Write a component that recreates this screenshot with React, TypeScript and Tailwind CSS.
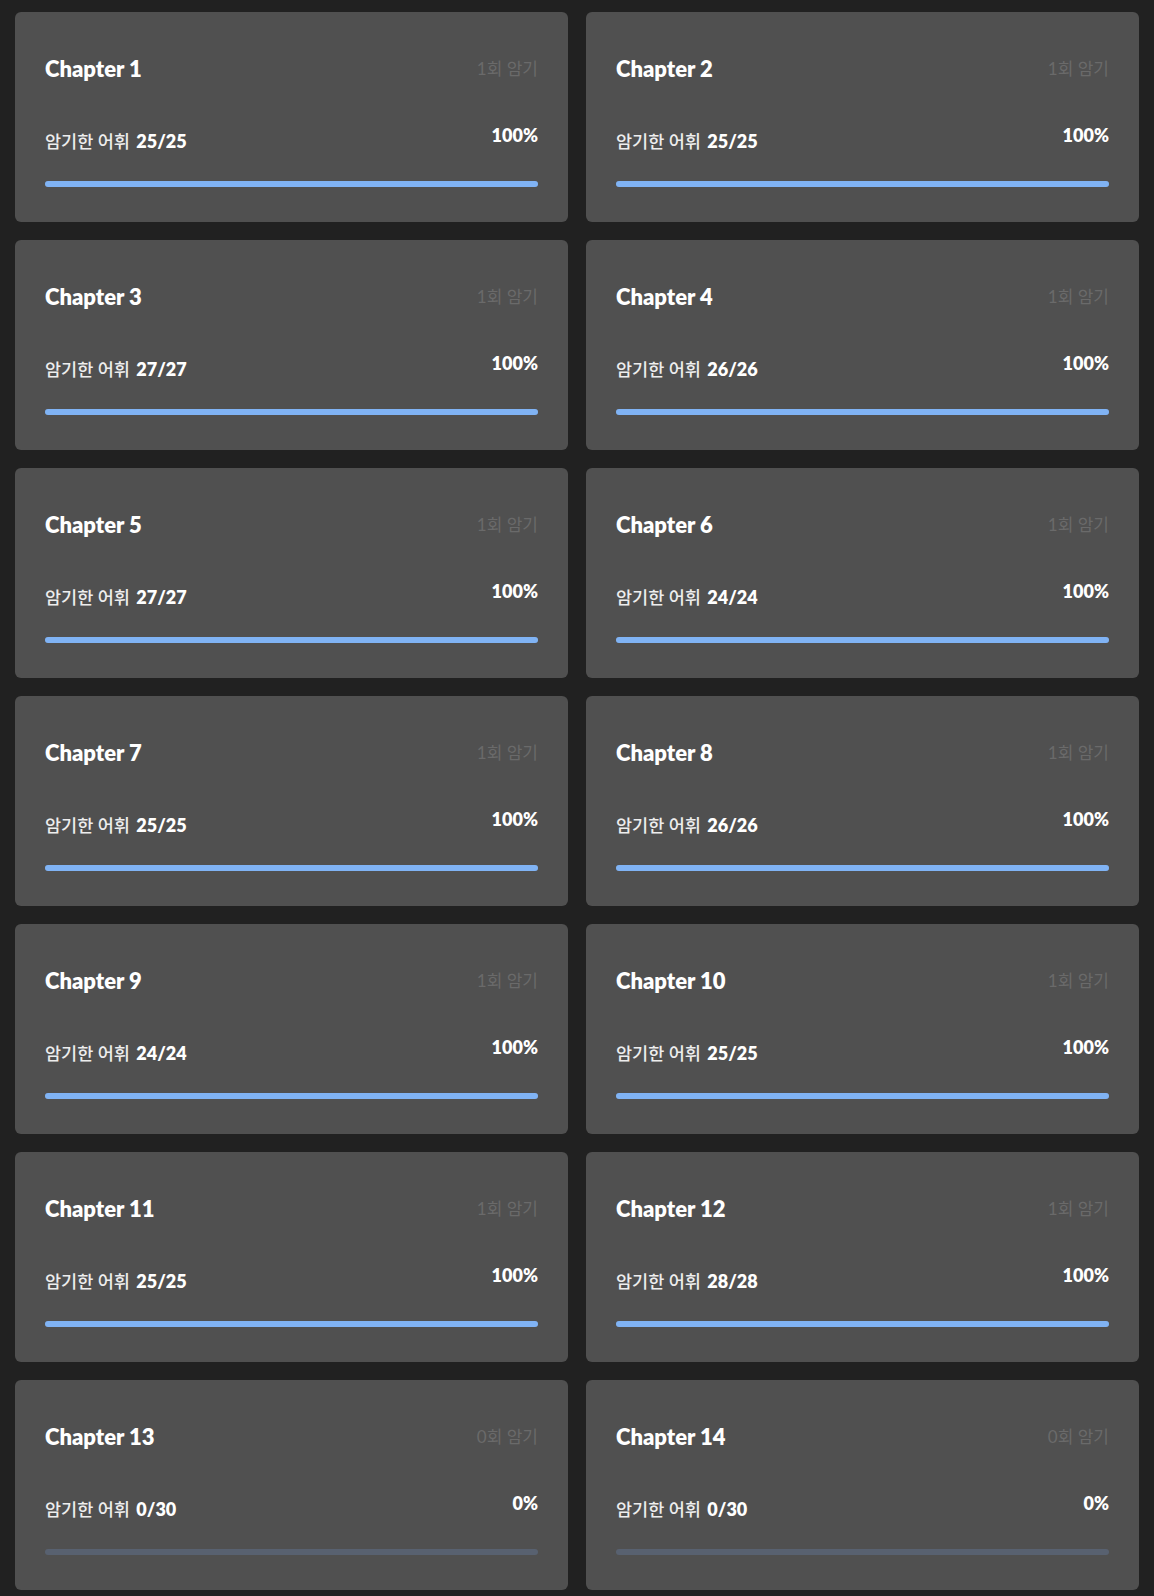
type Chapter = {
  no: number;
  done: number;
  total: number;
  rounds: number;
};

const chapters: Chapter[] = [
  { no: 1, done: 25, total: 25, rounds: 1 },
  { no: 2, done: 25, total: 25, rounds: 1 },
  { no: 3, done: 27, total: 27, rounds: 1 },
  { no: 4, done: 26, total: 26, rounds: 1 },
  { no: 5, done: 27, total: 27, rounds: 1 },
  { no: 6, done: 24, total: 24, rounds: 1 },
  { no: 7, done: 25, total: 25, rounds: 1 },
  { no: 8, done: 26, total: 26, rounds: 1 },
  { no: 9, done: 24, total: 24, rounds: 1 },
  { no: 10, done: 25, total: 25, rounds: 1 },
  { no: 11, done: 25, total: 25, rounds: 1 },
  { no: 12, done: 28, total: 28, rounds: 1 },
  { no: 13, done: 0, total: 30, rounds: 0 },
  { no: 14, done: 0, total: 30, rounds: 0 },
];

function ChapterCard({ c }: { c: Chapter }) {
  const pct = Math.round((c.done / c.total) * 100);

  return (
    <div className="h-[210px] rounded-md bg-[#505050] px-[30px] pt-[43px]">
      <div className="flex items-start justify-between">
        <h2 className="text-[22px] font-extrabold leading-[28px] text-white">
          Chapter {c.no}
        </h2>
        <span className="mt-[2px] text-[17px] leading-[24px] text-[#6a6a6a]">
          {c.rounds}회 암기
        </span>
      </div>
      <div className="mt-[40px] flex items-start justify-between">
        <span className="mt-[6px] text-[17.5px] font-medium leading-[24px] text-[#ededed]">
          암기한 어휘{" "}
          <strong className="ml-[2px] text-[18px] font-extrabold text-white">
            {c.done}/{c.total}
          </strong>
        </span>
        <span className="text-[18px] font-extrabold leading-[24px] text-white">
          {pct}%
        </span>
      </div>
      <div className="mt-[27px] h-[6px] w-full rounded-full bg-[#586170]">
        <div
          className="h-full rounded-full bg-[#80b3f4]"
          style={{ width: `${pct}%` }}
        />
      </div>
    </div>
  );
}

export default function App() {
  return (
    <div
      className="min-h-[1596px] bg-[#212121] px-[15px] pt-3 pb-[6px]"
      style={{ fontFamily: "Lato, 'Noto Sans CJK KR', sans-serif" }}
    >
      <div className="grid grid-cols-2 gap-[18px]">
        {chapters.map((c) => (
          <ChapterCard key={c.no} c={c} />
        ))}
      </div>
    </div>
  );
}
